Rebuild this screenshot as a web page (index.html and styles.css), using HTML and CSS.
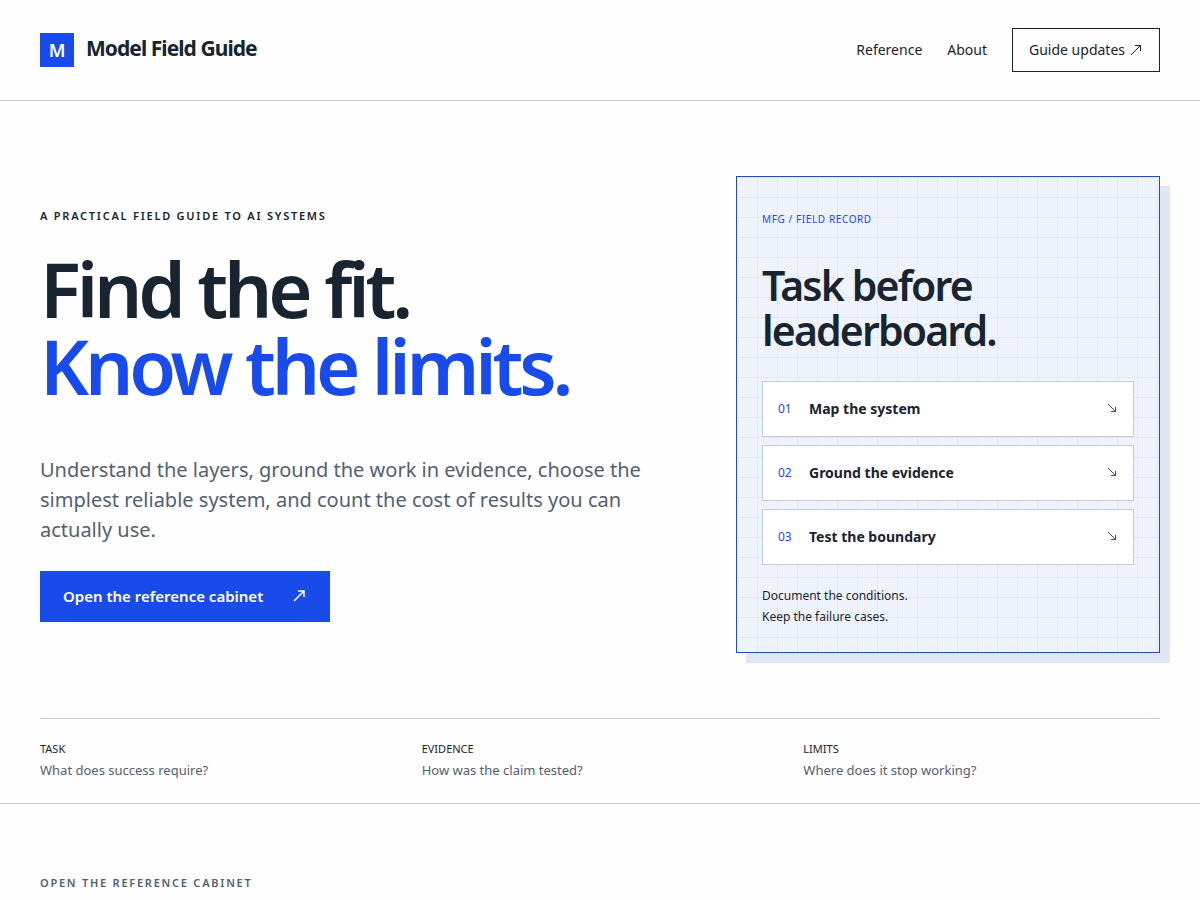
FILE: index.html
```html
<!DOCTYPE html>
<html lang="en">
<head>
<meta charset="utf-8">
<meta name="viewport" content="width=device-width, initial-scale=1">
<title>Model Field Guide</title>
<link rel="stylesheet" href="styles.css">
</head>
<body>
<header class="site-header">
  <a class="brand" href="#"><span class="brand-mark">M</span><span class="brand-name">Model Field Guide</span></a>
  <nav class="nav">
    <a href="#reference">Reference</a>
    <a href="#about">About</a>
    <a class="nav-button" href="#updates">Guide updates
      <svg class="nav-arrow" viewBox="0 0 12 12" aria-hidden="true"><path d="M1 11 10.500 1.500M5 1.500H10.500V7"/></svg></a>
  </nav>
</header>
<main>
  <section class="hero">
    <div class="hero-main">
      <div class="intro">
        <p class="eyebrow">A PRACTICAL FIELD GUIDE TO AI SYSTEMS</p>
        <h1 class="title">Find the fit.<span class="title-accent">Know the limits.</span></h1>
        <p class="lead">Understand the layers, ground the work in evidence, choose the simplest reliable system, and count the cost of results you can actually use.</p>
        <a class="cta" href="#reference">Open the reference cabinet
          <svg class="cta-arrow" viewBox="0 0 12 12" aria-hidden="true"><path d="M1 11 11 1M5 1H11V7"/></svg></a>
      </div>
      <aside class="record">
        <p class="record-label">MFG / FIELD RECORD</p>
        <h2 class="record-title">Task before leaderboard.</h2>
        <ol class="steps">
          <li><a class="step" href="#map"><span class="step-number">01</span><strong class="step-name">Map the system</strong><svg class="step-arrow" viewBox="0 0 10 10" aria-hidden="true"><path d="M1 1 8.500 8.500M8.500 4V8.500H4"/></svg></a></li>
          <li><a class="step" href="#ground"><span class="step-number">02</span><strong class="step-name">Ground the evidence</strong><svg class="step-arrow" viewBox="0 0 10 10" aria-hidden="true"><path d="M1 1 8.500 8.500M8.500 4V8.500H4"/></svg></a></li>
          <li><a class="step" href="#test"><span class="step-number">03</span><strong class="step-name">Test the boundary</strong><svg class="step-arrow" viewBox="0 0 10 10" aria-hidden="true"><path d="M1 1 8.500 8.500M8.500 4V8.500H4"/></svg></a></li>
        </ol>
        <p class="record-note">Document the conditions.<br>Keep the failure cases.</p>
      </aside>
    </div>
    <dl class="questions">
      <div><dt>TASK</dt><dd>What does success require?</dd></div>
      <div><dt>EVIDENCE</dt><dd>How was the claim tested?</dd></div>
      <div><dt>LIMITS</dt><dd>Where does it stop working?</dd></div>
    </dl>
  </section>
  <section class="cabinet" id="reference">
    <p class="eyebrow eyebrow-muted">OPEN THE REFERENCE CABINET</p>
  </section>
</main>
</body>
</html>
```
FILE: styles.css
```css
:root {
  --ink: #192431;
  --muted: #526173;
  --blue: #194bea;
  --line: #c5cfdb;
  --panel: #eff4fc;
  --grid: #e1e8f2;
}

* {
  box-sizing: border-box;
}

body {
  margin: 0;
  background: #fefefe;
  color: var(--ink);
  font-family: "Noto Sans", sans-serif;
  font-size: 16px;
}

a {
  color: inherit;
  text-decoration: none;
}

h1, h2, p, ol, dl, dd {
  margin: 0;
  padding: 0;
}

svg {
  fill: none;
  stroke: currentColor;
  flex: none;
}

.site-header {
  display: flex;
  align-items: center;
  justify-content: space-between;
  padding: 28px 40px;
  border-bottom: 1px solid var(--line);
}

.brand {
  display: flex;
  gap: 12px;
}

.brand-mark {
  display: grid;
  place-items: center;
  width: 34px;
  height: 34px;
  background: var(--blue);
  color: #fff;
  font-size: 18px;
  font-weight: 600;
}

.brand-name {
  font-size: 21px;
  line-height: 30px;
  font-weight: 700;
  letter-spacing: -0.045em;
}

.nav {
  display: flex;
  align-items: center;
  gap: 25px;
  font-size: 14px;
  line-height: 18px;
}

.nav-button {
  display: flex;
  align-items: center;
  gap: 5px;
  min-height: 44px;
  padding: 0 17px 0 16px;
  border: 1px solid var(--ink);
}

.nav-arrow {
  width: 12px;
  height: 12px;
}

.hero {
  padding: 75px 40px 0;
  border-bottom: 1px solid var(--line);
}

.hero-main {
  display: grid;
  grid-template-columns: minmax(0, 1fr) 424px;
  gap: 80px;
  align-items: center;
  padding-bottom: 65px;
}

.eyebrow {
  font-size: 11px;
  line-height: 18px;
  font-weight: 600;
  letter-spacing: 0.16em;
}

.title {
  margin-top: 25px;
  font-size: 76px;
  line-height: 77px;
  font-weight: 600;
  letter-spacing: -0.055em;
}

.title-accent {
  display: block;
  color: var(--blue);
}

.lead {
  max-width: 610px;
  margin-top: 51px;
  color: var(--muted);
  font-size: 20px;
  line-height: 30px;
}

.cta {
  display: inline-flex;
  align-items: center;
  gap: 30px;
  min-height: 51px;
  margin-top: 26px;
  padding: 0 25px 1px 23px;
  background: var(--blue);
  color: #fff;
  font-size: 15px;
  line-height: 20px;
  font-weight: 600;
}

.cta-arrow {
  width: 12px;
  height: 12px;
  stroke-width: 1.5;
}

.record {
  padding: 32px 25px 25px;
  border: 1px solid #234fb5;
  background-color: var(--panel);
  background-image:
    linear-gradient(var(--grid) 1px, transparent 1px),
    linear-gradient(90deg, var(--grid) 1px, transparent 1px);
  background-size: 20px 20px;
  box-shadow: 10px 10px 0 #e0e6f3;
}

.record-label {
  color: var(--blue);
  font-size: 10px;
  line-height: 20px;
  letter-spacing: 0.06em;
}

.record-title {
  margin-top: 34px;
  font-size: 41px;
  line-height: 45px;
  font-weight: 600;
  letter-spacing: -0.045em;
}

.steps {
  display: grid;
  gap: 8px;
  margin-top: 28px;
  list-style: none;
}

.step {
  display: flex;
  align-items: center;
  min-height: 56px;
  padding: 0 16px 2px 15px;
  border: 1px solid var(--line);
  background: #fff;
}

.step-number {
  width: 31px;
  color: var(--blue);
  font-size: 12px;
}

.step-name {
  flex: 1;
  font-size: 14px;
  font-weight: 700;
}

.step-arrow {
  width: 10px;
  height: 10px;
  color: var(--blue);
}

.record-note {
  margin-top: 20px;
  font-size: 12px;
  line-height: 21px;
}

.questions {
  display: grid;
  grid-template-columns: repeat(3, minmax(0, 1fr));
  gap: 25px;
  padding: 19px 0 22px;
  border-top: 1px solid var(--line);
}

.questions dt {
  font-size: 11px;
  line-height: 21px;
}

.questions dd {
  color: var(--muted);
  font-size: 13px;
  line-height: 22px;
}

.cabinet {
  padding: 70px 40px 8px;
}

.eyebrow-muted {
  color: var(--muted);
}
```
